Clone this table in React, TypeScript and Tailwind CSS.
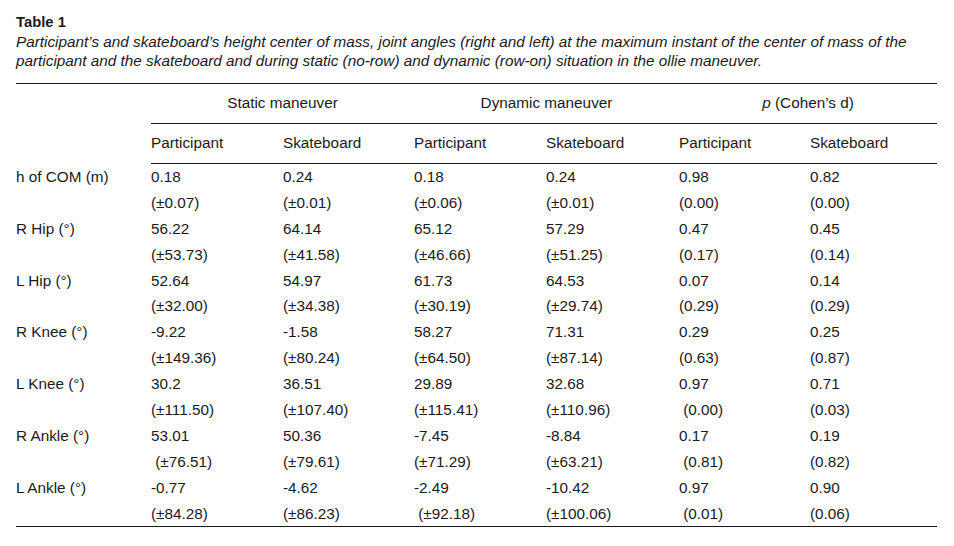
import React from "react";

const rows: { label: string; a: string[]; b: string[] }[] = [
  {
    label: "h of COM (m)",
    a: ["0.18", "0.24", "0.18", "0.24", "0.98", "0.82"],
    b: ["(±0.07)", "(±0.01)", "(±0.06)", "(±0.01)", "(0.00)", "(0.00)"],
  },
  {
    label: "R Hip (°)",
    a: ["56.22", "64.14", "65.12", "57.29", "0.47", "0.45"],
    b: ["(±53.73)", "(±41.58)", "(±46.66)", "(±51.25)", "(0.17)", "(0.14)"],
  },
  {
    label: "L Hip (°)",
    a: ["52.64", "54.97", "61.73", "64.53", "0.07", "0.14"],
    b: ["(±32.00)", "(±34.38)", "(±30.19)", "(±29.74)", "(0.29)", "(0.29)"],
  },
  {
    label: "R Knee (°)",
    a: ["-9.22", "-1.58", "58.27", "71.31", "0.29", "0.25"],
    b: ["(±149.36)", "(±80.24)", "(±64.50)", "(±87.14)", "(0.63)", "(0.87)"],
  },
  {
    label: "L Knee (°)",
    a: ["30.2", "36.51", "29.89", "32.68", "0.97", "0.71"],
    b: ["(±111.50)", "(±107.40)", "(±115.41)", "(±110.96)", " (0.00)", "(0.03)"],
  },
  {
    label: "R Ankle (°)",
    a: ["53.01", "50.36", "-7.45", "-8.84", "0.17", "0.19"],
    b: [" (±76.51)", "(±79.61)", "(±71.29)", "(±63.21)", " (0.81)", "(0.82)"],
  },
  {
    label: "L Ankle (°)",
    a: ["-0.77", "-4.62", "-2.49", "-10.42", "0.97", "0.90"],
    b: ["(±84.28)", "(±86.23)", " (±92.18)", "(±100.06)", " (0.01)", "(0.06)"],
  },
];

const grid =
  "grid grid-cols-[135px_132px_131px_132px_133px_131px_127px]";

export default function App() {
  return (
    <div
      className="w-[954px] h-[546px] bg-white text-[#1a1a1a] pl-[16px] pt-[13px]"
      style={{ fontFamily: '"Liberation Sans", Arial, sans-serif' }}
    >
      <div className="text-[14.8px] leading-[19px] font-bold">Table 1</div>
      <div className="text-[15.3px] leading-[19px] italic whitespace-nowrap">
        Participant’s and skateboard’s height center of mass, joint angles (right and left) at the maximum instant of the center of mass of the
        <br />
        participant and the skateboard and during static (no-row) and dynamic (row-on) situation in the ollie maneuver.
      </div>
      <div className="w-[921px] mt-[13px] border-t border-[#1a1a1a] text-[15.3px]">
        <div className={grid}>
          <div className="h-[39px]" />
          <div className="col-span-2 h-[39px] flex items-center justify-center">
            Static maneuver
          </div>
          <div className="col-span-2 h-[39px] flex items-center justify-center">
            Dynamic maneuver
          </div>
          <div className="col-span-2 h-[39px] flex items-center justify-center">
            <span className="italic">p</span>&nbsp;(Cohen’s d)
          </div>
        </div>
        <div className={grid}>
          <div className="h-[40px]" />
          {["Participant", "Skateboard", "Participant", "Skateboard", "Participant", "Skateboard"].map(
            (t, i) => (
              <div
                key={i}
                className="h-[40px] border-t border-[#1a1a1a] flex items-center"
              >
                {t}
              </div>
            )
          )}
        </div>
        <div className={grid}>
          <div />
          <div className="col-span-6 border-t border-[#1a1a1a]" />
        </div>
        <div className="border-b border-[#1a1a1a]">
          {rows.map((r) => (
            <React.Fragment key={r.label}>
              <div className={grid + " h-[25.9px] leading-[25.9px]"}>
                <div>{r.label}</div>
                {r.a.map((v, i) => (
                  <div key={i} className="whitespace-pre">
                    {v}
                  </div>
                ))}
              </div>
              <div className={grid + " h-[25.9px] leading-[25.9px]"}>
                <div />
                {r.b.map((v, i) => (
                  <div key={i} className="whitespace-pre">
                    {v}
                  </div>
                ))}
              </div>
            </React.Fragment>
          ))}
        </div>
      </div>
    </div>
  );
}
